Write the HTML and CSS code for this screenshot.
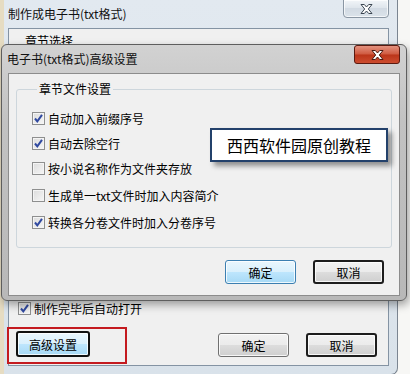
FILE: index.html
```html
<!DOCTYPE html>
<html lang="zh-CN">
<head>
<meta charset="utf-8">
<title>电子书(txt格式)高级设置</title>
<link rel="stylesheet" href="styles.css">
</head>
<body>
<div class="stage">
  <div class="win outer">
    <div class="titlebar">
      <span class="title">制作成电子书(txt格式)</span>
      <span class="close close-plain">
        <svg width="13" height="10" viewBox="0 0 13 10"><path d="M1 0.5 H4.3 L6.5 3 L8.7 0.5 H12 L8.3 5 L12 9.5 H8.7 L6.5 7 L4.3 9.5 H1 L4.7 5 Z" fill="#fff" stroke="#3b4652" stroke-width="1" stroke-linejoin="round"/></svg>
      </span>
    </div>
    <div class="client outer-client">
      <div class="tabhead">章节选择</div>
      <div class="spacer"></div>
      <div class="check outer-check"><span class="box"><svg width="11" height="11" viewBox="0 0 11 11"><path d="M2 5.5 L4.3 8.3 L9 1.8" fill="none" stroke="#3049a0" stroke-width="2"/></svg></span>制作完毕后自动打开</div>
      <div class="btnrow outer-btns">
        <span class="btn btn-blue btn-focus">高级设置</span>
        <span class="grow"></span>
        <span class="btn">确定</span>
        <span class="btn btn-default">取消</span>
      </div>
    </div>
    <div class="annot"></div>
  </div>

  <div class="win inner">
    <div class="titlebar inner-title">
      <span class="title">电子书(txt格式)高级设置</span>
      <span class="close close-red">
        <svg width="13" height="10" viewBox="0 0 13 10"><path d="M1 0.5 H4.3 L6.5 3 L8.7 0.5 H12 L8.3 5 L12 9.5 H8.7 L6.5 7 L4.3 9.5 H1 L4.7 5 Z" fill="#fff" stroke="#4a1a12" stroke-width="1" stroke-linejoin="round"/></svg>
      </span>
    </div>
    <div class="client inner-client">
      <fieldset class="group">
        <legend>章节文件设置</legend>
        <div class="check"><span class="box"><svg width="11" height="11" viewBox="0 0 11 11"><path d="M2 5.5 L4.3 8.3 L9 1.8" fill="none" stroke="#3049a0" stroke-width="2"/></svg></span>自动加入前缀序号</div>
        <div class="check"><span class="box"><svg width="11" height="11" viewBox="0 0 11 11"><path d="M2 5.5 L4.3 8.3 L9 1.8" fill="none" stroke="#3049a0" stroke-width="2"/></svg></span>自动去除空行</div>
        <div class="check"><span class="box"></span>按小说名称作为文件夹存放</div>
        <div class="check check-gap"><span class="box"></span>生成单一txt文件时加入内容简介</div>
        <div class="check check-gap"><span class="box"><svg width="11" height="11" viewBox="0 0 11 11"><path d="M2 5.5 L4.3 8.3 L9 1.8" fill="none" stroke="#3049a0" stroke-width="2"/></svg></span>转换各分卷文件时加入分卷序号</div>
      </fieldset>
      <div class="btnrow inner-btns">
        <span class="btn btn-blue">确定</span>
        <span class="btn btn-default">取消</span>
      </div>
    </div>
    <div class="watermark">西西软件园原创教程</div>
  </div>
</div>
</body>
</html>
```

FILE: styles.css
```css
* { box-sizing: border-box; }

html, body {
  margin: 0;
  padding: 0;
  background: #ffffff;
}

body {
  font-family: "Noto Sans CJK SC", "Microsoft YaHei", sans-serif;
  font-size: 12px;
  color: #000;
}

.stage {
  position: relative;
  width: 410px;
  height: 374px;
  overflow: hidden;
  background: #f7f7f5;
}

.win {
  display: flex;
  flex-direction: column;
}

.outer {
  width: 398px;
  height: 375px;
  padding: 0 8px 8px;
  background: linear-gradient(#e2e9f0, #d9e2ea);
  border: 1px solid #7b8591;
  border-top: none;
  border-left: 4px solid #e6dcc2;
  border-radius: 0 0 7px 0;
  padding-left: 4px;
}

.titlebar {
  display: flex;
  justify-content: space-between;
  align-items: flex-start;
  height: 28px;
  flex: none;
}

.title {
  line-height: 14px;
  margin-top: 7px;
  color: #111;
  white-space: nowrap;
}

.close {
  display: flex;
  align-items: center;
  justify-content: center;
  width: 46px;
  height: 19px;
  border-radius: 0 0 4px 4px;
}

.close-plain {
  margin-top: -1px;
  border: 1px solid #8a96a3;
  background: linear-gradient(#f2f5f8, #dde4eb 50%, #d2dae3 50%, #dbe3ea);
  box-shadow: inset 0 0 0 1px rgba(255,255,255,0.7);
}

.client {
  flex: 1;
  background: #f0f0f0;
  display: flex;
  flex-direction: column;
}

.outer-client {
  border: 1px solid #8493a3;
  padding: 0 11px 8px 7px;
}

.tabhead {
  line-height: 14px;
  margin: 5px 0 0 9px;
}

.spacer { flex: 1; }

.check {
  display: flex;
  align-items: center;
  height: 13px;
  line-height: 13px;
  white-space: nowrap;
}

.box {
  width: 13px;
  height: 13px;
  flex: none;
  margin-right: 3px;
  border: 1px solid #8e8f8f;
  background: linear-gradient(135deg, #dcdcdc, #f6f6f6);
  box-shadow: inset 0 0 0 1px #f4f4f4;
  display: flex;
  align-items: center;
  justify-content: center;
}

.outer-check {
  margin: 0 0 16px 2px;
}

.btnrow {
  display: flex;
  align-items: flex-end;
  gap: 17px;
}

.grow { flex: 1; }

.btn {
  display: flex;
  align-items: center;
  justify-content: center;
  width: 71px;
  height: 24px;
  border: 1px solid #707070;
  border-radius: 3px;
  background: linear-gradient(#f2f2f2 0%, #ebebeb 50%, #dddddd 50%, #cfcfcf 100%);
  box-shadow: inset 0 0 0 1px rgba(255,255,255,0.8);
}

.btn-blue {
  border-color: #3c7fb1;
  background: linear-gradient(#eaf6fd 0%, #d9f0fc 50%, #bee6fd 50%, #a7d9f5 100%);
}

.btn-focus {
  width: 74px;
  height: 26px;
  border: 2px solid #111;
}

.btn-default {
  border: 2px solid #1d1d1d;
}

.annot {
  position: absolute;
  left: 7px;
  top: 327px;
  width: 120px;
  height: 37px;
  border: 2px solid #c41a1f;
}

/* inner dialog */
.inner {
  position: absolute;
  left: 1px;
  top: 44px;
  width: 406px;
  height: 257px;
  padding: 0 6px 6px 6px;
  background: linear-gradient(#d2d2d2, #c2c2c2 30%, #b8b8b8);
  border: 1px solid #5e5e5e;
  border-radius: 6px;
  box-shadow: 2px 4px 8px rgba(0,0,0,0.35);
}

.inner-title .title {
  margin-left: -1px;
}

.inner-title .close-red {
  margin-top: 0;
  border: 1px solid #5a1a10;
  border-radius: 3px;
  width: 46px;
  height: 19px;
  background-color: #c8432a;
  background-image: linear-gradient(#e4927f, #cf5a40 48%, #bb3519 52%, #cc4c2f);
}

.inner-client {
  border: 1px solid #8c8c8c;
  padding: 0 7px 11px 7px;
}

.group {
  margin: 8px 0 0;
  padding: 16px 0 18px 15px;
  min-width: 0;
  border: 1px solid #cdd6dc;
  border-radius: 3px;
  display: flex;
  flex-direction: column;
  gap: 12px;
}

.group legend {
  margin-left: 5px;
  padding: 0 2px;
  line-height: 14px;
}

.check-gap {
  margin-top: 2px;
}

.inner-btns {
  justify-content: flex-end;
  margin-top: 12px;
  padding-right: 8px;
}

.watermark {
  position: absolute;
  left: 208px;
  top: 83px;
  width: 178px;
  height: 34px;
  background: #fff;
  border: 2px solid #23416b;
  box-shadow: 4px 4px 5px rgba(0,0,0,0.4);
  font-size: 16px;
  line-height: 30px;
  text-align: center;
  letter-spacing: 0;
}
```
